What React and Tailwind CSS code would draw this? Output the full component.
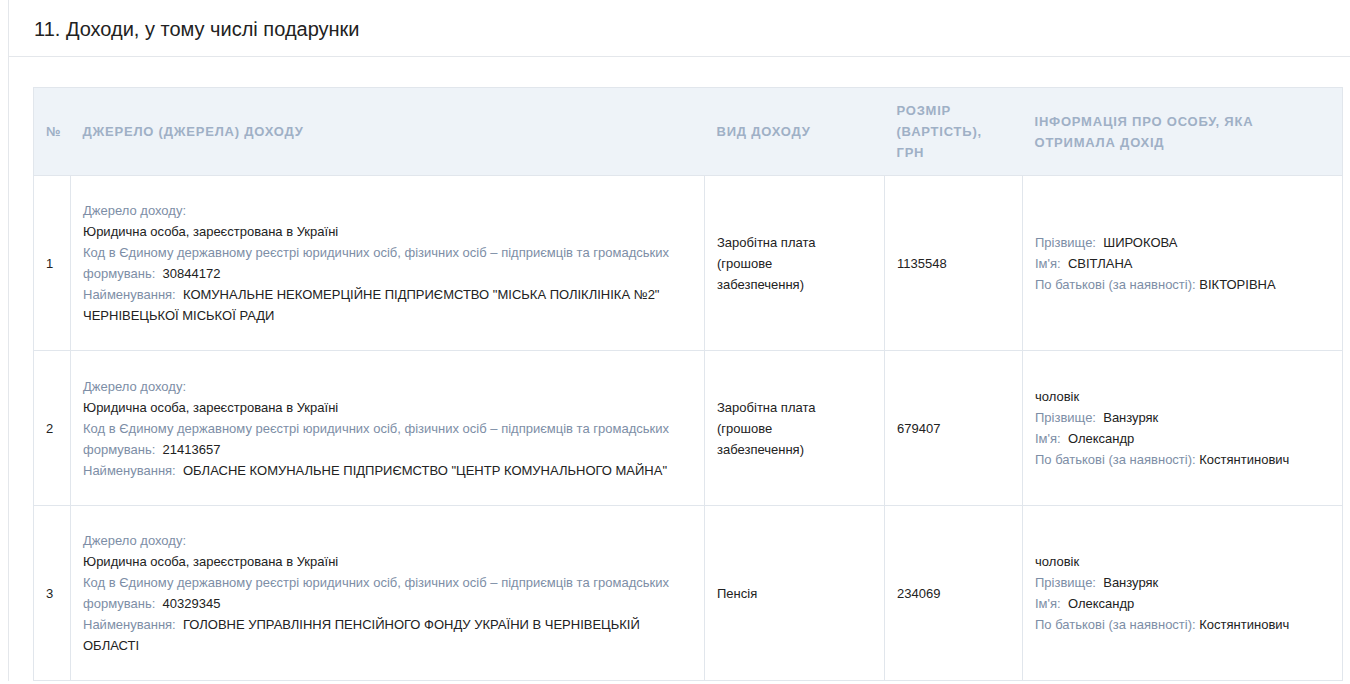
import React from "react";

const rows = [
  {
    n: 1,
    code: "30844172",
    name: 'КОМУНАЛЬНЕ НЕКОМЕРЦІЙНЕ ПІДПРИЄМСТВО "МІСЬКА ПОЛІКЛІНІКА №2" ЧЕРНІВЕЦЬКОЇ МІСЬКОЇ РАДИ',
    type: ["Заробітна плата", "(грошове", "забезпечення)"],
    sum: "1135548",
    rel: null,
    person: ["ШИРОКОВА", "СВІТЛАНА", "ВІКТОРІВНА"],
  },
  {
    n: 2,
    code: "21413657",
    name: 'ОБЛАСНЕ КОМУНАЛЬНЕ ПІДПРИЄМСТВО "ЦЕНТР КОМУНАЛЬНОГО МАЙНА"',
    type: ["Заробітна плата", "(грошове", "забезпечення)"],
    sum: "679407",
    rel: "чоловік",
    person: ["Ванзуряк", "Олександр", "Костянтинович"],
  },
  {
    n: 3,
    code: "40329345",
    name: "ГОЛОВНЕ УПРАВЛІННЯ ПЕНСІЙНОГО ФОНДУ УКРАЇНИ В ЧЕРНІВЕЦЬКІЙ ОБЛАСТІ",
    type: ["Пенсія"],
    sum: "234069",
    rel: "чоловік",
    person: ["Ванзуряк", "Олександр", "Костянтинович"],
  },
];

const L = ({ children }) => <span className="text-[#7d8ea6]">{children}</span>;

export default function App() {
  return (
    <div className="bg-white min-h-[684px] font-[Liberation_Sans,Arial,sans-serif] text-[13px] text-[#222]">
      <div className="ml-2 border-l border-[#e4e7eb]">
        <div className="h-[57px] border-b border-[#e4e7eb] pl-[25px] pt-[14px] text-[20px] text-[#222]">
          11. Доходи, у тому числі подарунки
        </div>
        <div className="pl-[24px] pr-2 pt-[30px]">
          <table className="w-[1310px] border border-[#e1e6ec] border-collapse table-fixed leading-[21px]">
            <colgroup>
              <col className="w-[37px]" />
              <col className="w-[634px]" />
              <col className="w-[180px]" />
              <col className="w-[138px]" />
              <col />
            </colgroup>
            <thead>
              <tr className="h-[88px] bg-[#eef3f8] text-[#9fb0c6] font-bold uppercase tracking-[0.06em] text-left">
                <th className="px-3 font-bold normal-case">№</th>
                <th className="px-3">Джерело (джерела) доходу</th>
                <th className="px-3">Вид доходу</th>
                <th className="px-3">Розмір (вартість), грн</th>
                <th className="px-3">Інформація про особу, яка отримала дохід</th>
              </tr>
            </thead>
            <tbody>
              {rows.map((r, i) => (
                <tr key={r.n} className={`border-t border-[#e1e6ec] ${i === 1 ? "h-[155px]" : "h-[175px]"}`}>
                  <td className="px-3 border-r border-[#e1e6ec]">{r.n}</td>
                  <td className="px-3 border-r border-[#e1e6ec]">
                    <div><L>Джерело доходу:</L></div>
                    <div>Юридична особа, зареєстрована в Україні</div>
                    <div>
                      <L>Код в Єдиному державному реєстрі юридичних осіб, фізичних осіб – підприємців та громадських формувань:</L>
                      &nbsp;&nbsp;{r.code}
                    </div>
                    <div><L>Найменування:</L>&nbsp;&nbsp;{r.name}</div>
                  </td>
                  <td className="px-3 border-r border-[#e1e6ec]">
                    {r.type.map((t) => <div key={t}>{t}</div>)}
                  </td>
                  <td className="px-3 border-r border-[#e1e6ec]">{r.sum}</td>
                  <td className="px-3">
                    {r.rel && <div>{r.rel}</div>}
                    <div><L>Прізвище:</L>&nbsp;&nbsp;{r.person[0]}</div>
                    <div><L>Ім'я:</L>&nbsp;&nbsp;{r.person[1]}</div>
                    <div><L>По батькові (за наявності):</L>&nbsp;{r.person[2]}</div>
                  </td>
                </tr>
              ))}
            </tbody>
          </table>
        </div>
      </div>
    </div>
  );
}
